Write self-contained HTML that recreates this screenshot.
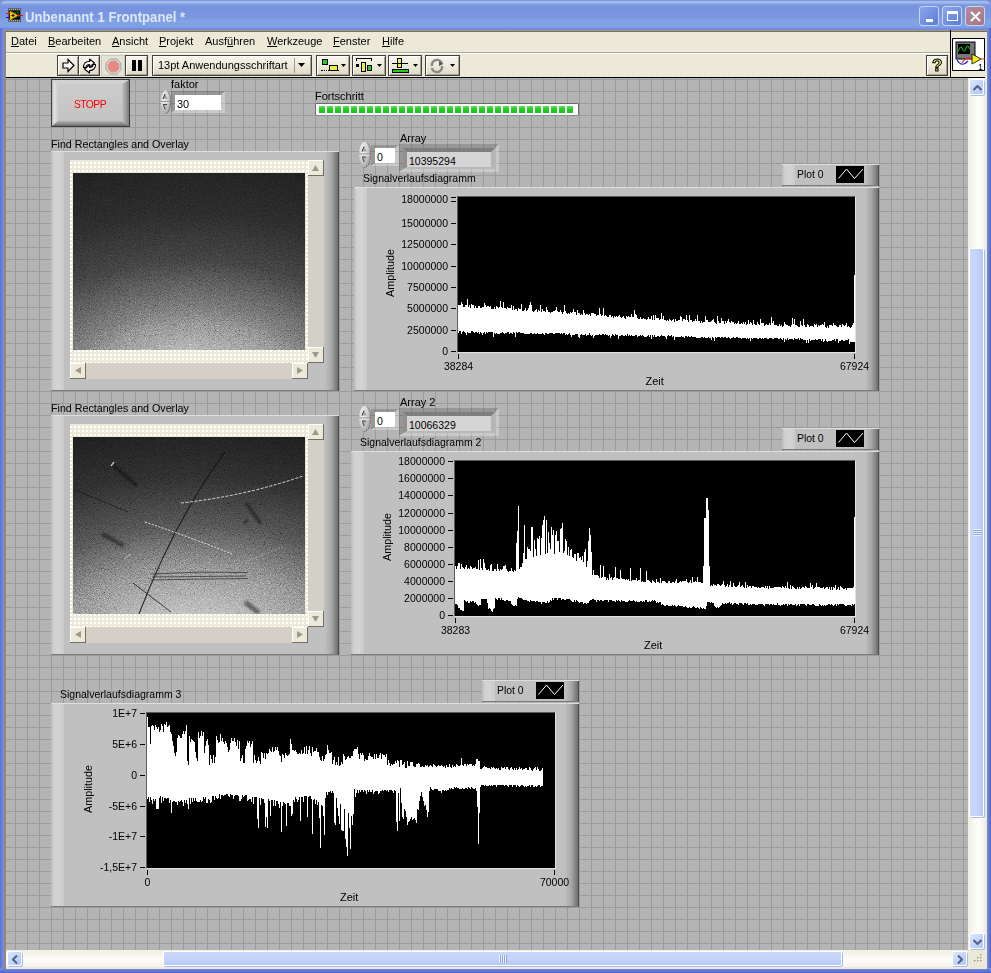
<!DOCTYPE html><html><head><meta charset="utf-8"><style>
*{margin:0;padding:0;box-sizing:border-box}
html,body{width:991px;height:973px;overflow:hidden;background:#7a8fdc}
body{position:relative;font-family:"Liberation Sans",sans-serif;font-size:11px;color:#000}
.a{position:absolute}
.t{position:absolute;white-space:pre;line-height:1;font-family:"Liberation Sans",sans-serif}
.grid{background-color:#b4b4b4;
 background-image:linear-gradient(to right,#9b9b9b 1px,transparent 1px),linear-gradient(to bottom,#9b9b9b 1px,transparent 1px);
 background-size:12px 12px;}
.tb{position:absolute;border:1px solid #404040;background:linear-gradient(#f6f5ee,#ece9d8 55%,#dcd8c8);box-shadow:inset 1px 1px 0 #fff,inset -1px -1px 0 #a8a594}
.frame{position:absolute;background:#c0c0c0;
 box-shadow: inset 0 1px 0 #dedede, inset -1px 0 0 #4c4c4c, inset 0 -1px 0 #7a7a7a;}
.frame:before{content:"";position:absolute;left:0;top:1px;bottom:1px;width:13px;background:linear-gradient(to right,#bababa,#d0d0d0 20%,#d4d4d4 60%,#cacaca 100%)}
.frame:after{content:"";position:absolute;right:1px;top:1px;bottom:1px;width:13px;background:linear-gradient(to right,#c0c0c0,#a6a6a6 50%,#6e6e6e)}
.plot{position:absolute;background:#000;border-top:1px solid #5c5c5c;border-left:1px solid #5c5c5c;box-shadow:1px 1px 0 #e2e2e2}
.ylab{position:absolute;font-size:10.5px;line-height:1;white-space:pre;text-align:right}
.tick{position:absolute;height:1px;width:5px;background:#000}
</style></head><body>
<div class="a" style="left:0;top:0;width:991px;height:30px;border-radius:7px 7px 0 0;background:linear-gradient(#6886de 0px,#a3baeb 1.5px,#a0b8ea 3px,#7e9ce0 4.5px,#7893de 7px,#7b97df 17px,#80a3e6 21px,#7fa0e4 27px,#7289dd 29px,#6f86dc 30px)"></div>
<div class="a" style="left:0;top:28px;width:4px;height:945px;background:linear-gradient(to right,#5f6fd6,#7a90e0)"></div>
<div class="a" style="left:987px;top:28px;width:4px;height:945px;background:linear-gradient(to right,#7a90e0,#5262c8)"></div>
<div class="a" style="left:0;top:968px;width:991px;height:5px;background:linear-gradient(#7a90e0,#5262c8)"></div>
<svg class="a" style="left:5px;top:7px" width="18" height="16" viewBox="0 0 18 16">
<rect x="3" y="1" width="13" height="14" fill="#5a5a5a"/>
<rect x="4" y="3.5" width="11" height="9" fill="#0a0a0a"/>
<g fill="#c8c8c8"><rect x="4" y="1.8" width="1" height="1"/><rect x="6" y="1.8" width="1" height="1"/><rect x="8" y="1.8" width="1" height="1"/><rect x="10" y="1.8" width="1" height="1"/><rect x="12" y="1.8" width="1" height="1"/><rect x="14" y="1.8" width="1" height="1"/>
<rect x="4" y="13.2" width="1" height="1"/><rect x="6" y="13.2" width="1" height="1"/><rect x="8" y="13.2" width="1" height="1"/><rect x="10" y="13.2" width="1" height="1"/><rect x="12" y="13.2" width="1" height="1"/><rect x="14" y="13.2" width="1" height="1"/></g>
<path d="M10 5 Q12 8 11 11 M12 4 Q14 7 14 10" stroke="#1c8c1c" fill="none" stroke-width="0.9"/>
<path d="M5 4 L5 13 L13 8.5 Z" fill="#f2cc10" stroke="#c89a00" stroke-width="0.5"/>
<path d="M8 7V10M6.5 8.5H9.5" stroke="#000" stroke-width="1"/>
<rect x="1" y="6" width="4" height="1" fill="#e81010"/><rect x="1" y="10" width="4" height="1" fill="#1010e8"/><rect x="13" y="8" width="5" height="1" fill="#e81010"/>
</svg>
<div class="t" style="left:25px;top:9.5px;font-size:14.4px;font-weight:bold;color:#dde6f8;transform:scaleX(0.915);transform-origin:0 0">Unbenannt 1 Frontpanel *</div>
<div class="a" style="left:919px;top:6px;width:20px;height:20px;border:1px solid #c8d4f4;border-radius:3px;background:linear-gradient(135deg,#8aa6ec,#6d8de0 60%,#5c7cd6)"><div class="a" style="left:6px;top:12px;width:7px;height:3px;background:#fff"></div></div>
<div class="a" style="left:942px;top:6px;width:20px;height:20px;border:1px solid #c8d4f4;border-radius:3px;background:linear-gradient(135deg,#8aa6ec,#6d8de0 60%,#5c7cd6)"><div class="a" style="left:4px;top:4px;width:11px;height:10px;border:1px solid #fff;border-top-width:3px"></div></div>
<div class="a" style="left:965px;top:6px;width:20px;height:20px;border:1px solid #c8d4f4;border-radius:3px;background:linear-gradient(135deg,#b28a9a,#a87686)"><svg class="a" style="left:3px;top:3px" width="13" height="13"><path d="M2 2L11 11M11 2L2 11" stroke="#fff" stroke-width="2"/></svg></div>
<div class="a" style="left:4px;top:30px;width:983px;height:939px;background:#ece9d8;border-left:2px solid #8f8b7a;border-top:2px solid #77725f"></div><div class="a" style="left:4px;top:30px;width:983px;height:1px;background:#a09884"></div>
<div class="t" style="left:11px;top:36px;font-size:11px"><u>D</u>atei</div>
<div class="t" style="left:48px;top:36px;font-size:11px"><u>B</u>earbeiten</div>
<div class="t" style="left:112px;top:36px;font-size:11px"><u>A</u>nsicht</div>
<div class="t" style="left:159px;top:36px;font-size:11px"><u>P</u>rojekt</div>
<div class="t" style="left:205px;top:36px;font-size:11px">Ausf<u>ü</u>hren</div>
<div class="t" style="left:267px;top:36px;font-size:11px"><u>W</u>erkzeuge</div>
<div class="t" style="left:333px;top:36px;font-size:11px"><u>F</u>enster</div>
<div class="t" style="left:382px;top:36px;font-size:11px"><u>H</u>ilfe</div>
<div class="a" style="left:6px;top:52px;width:944px;height:1px;background:#aca899"></div>
<div class="a" style="left:6px;top:53px;width:944px;height:1px;background:#fff"></div>
<div class="a" style="left:950px;top:30px;width:1px;height:47px;background:#000"></div>
<div class="a" style="left:6px;top:77px;width:979px;height:1px;background:#000"></div>
<div class="tb" style="left:57px;top:55px;width:22px;height:21px;"><svg class="a" style="left:3px;top:2px" width="15" height="15"><path d="M2 5H7V1.5L13 7.5L7 13.5V10H2Z" fill="#fff" stroke="#000" stroke-width="1.2"/></svg></div>
<div class="tb" style="left:78px;top:55px;width:22px;height:21px;"><svg class="a" style="left:2px;top:2px" width="17" height="16" viewBox="0 0 17 16"><path d="M2.5 9.5C2.5 5 5 3.5 8.5 3.5V1L13.5 5L8.5 9V6.5C6.5 6.5 5 7.5 5 9.5Z" fill="#fff" stroke="#000" stroke-width="1.1" stroke-linejoin="round"/><path d="M14.5 6.5C14.5 11 12 12.5 8.5 12.5V15L3.5 11L8.5 7V9.5C10.5 9.5 12 8.5 12 6.5Z" fill="#fff" stroke="#000" stroke-width="1.1" stroke-linejoin="round"/></svg></div>
<div class="a" style="left:101px;top:55px;width:24px;height:21px;background:#e6e3d6;border:1px solid #cfcbbb"><svg class="a" style="left:3px;top:2px" width="17" height="17" viewBox="0 0 17 17"><path d="M5.2 1H11.8L16 5.2V11.8L11.8 16H5.2L1 11.8V5.2Z" fill="#d8d8d0" stroke="#9c9c94" stroke-width="0.9"/><path d="M6 3H11L14 6V11L11 14H6L3 11V6Z" fill="#e8887e" stroke="#c9a8a0" stroke-width="0.8"/></svg></div>
<div class="tb" style="left:125px;top:55px;width:23px;height:21px;"><div class="a" style="left:6px;top:4px;width:4px;height:11px;background:#000"></div><div class="a" style="left:12px;top:4px;width:4px;height:11px;background:#000"></div></div>
<div class="tb" style="left:152px;top:55px;width:160px;height:21px"><div class="t" style="left:5px;top:4px;font-size:11px">13pt Anwendungsschriftart</div><div class="a" style="left:141px;top:2px;width:1px;height:15px;background:#999"></div><svg class="a" style="left:145px;top:7px" width="8" height="5"><path d="M0 0H7L3.5 4Z" fill="#000"/></svg></div>
<div class="tb" style="left:316px;top:55px;width:34px;height:21px;"><div class="a" style="left:5px;top:3px;width:6px;height:6px;background:#2c2;border:1px solid #000"></div><div class="a" style="left:12px;top:9px;width:9px;height:6px;background:#ee4;border:1px solid #000"></div><div class="a" style="left:4px;top:14px;width:18px;height:1px;border-top:1px dotted #000"></div><svg class="a" style="left:24px;top:8px" width="6" height="4"><path d="M0 0H5L2.5 3Z" fill="#000"/></svg></div>
<div class="tb" style="left:352px;top:55px;width:34px;height:21px;"><div class="a" style="left:3px;top:2px;width:16px;height:3px;border:1px solid #000;border-bottom:none"></div><div class="a" style="left:3px;top:8px;width:3px;height:3px;background:#000"></div><div class="a" style="left:8px;top:6px;width:5px;height:10px;background:#ee4;border:1px solid #000"></div><div class="a" style="left:14px;top:9px;width:5px;height:6px;background:#2c2;border:1px solid #000"></div><svg class="a" style="left:24px;top:8px" width="6" height="4"><path d="M0 0H5L2.5 3Z" fill="#000"/></svg></div>
<div class="tb" style="left:388px;top:55px;width:34px;height:21px;"><div class="a" style="left:8px;top:2px;width:5px;height:10px;background:#ee4;border:1px solid #000"></div><div class="a" style="left:3px;top:7px;width:16px;height:1px;background:#000"></div><div class="a" style="left:3px;top:13px;width:17px;height:4px;background:#2c2;border:1px solid #000"></div><svg class="a" style="left:24px;top:8px" width="6" height="4"><path d="M0 0H5L2.5 3Z" fill="#000"/></svg></div>
<div class="tb" style="left:425px;top:55px;width:35px;height:21px;"><svg class="a" style="left:3px;top:2px" width="18" height="16"><path d="M3 8A5 5 0 0 1 13 6M13 8A5 5 0 0 1 3 10" stroke="#888" stroke-width="2.5" fill="none"/><path d="M10 3L14 6L10 8" fill="#555"/></svg><svg class="a" style="left:24px;top:8px" width="6" height="4"><path d="M0 0H5L2.5 3Z" fill="#000"/></svg></div>
<div class="tb" style="left:926px;top:55px;width:22px;height:21px;top:55px;"><div class="t" style="left:5px;top:1px;font-size:17px;font-weight:bold;color:#ee5;-webkit-text-stroke:1px #000">?</div></div>
<div class="a" style="left:952px;top:38px;width:33px;height:33px;background:#fff;border:1px solid #000">
<svg class="a" style="left:1px;top:1px" width="31" height="31" viewBox="0 0 31 31">
<rect x="2" y="2" width="19" height="17" fill="#777" stroke="#000" stroke-width="1"/>
<rect x="4" y="4" width="12" height="10" fill="#000"/>
<path d="M4.5 11 Q6.5 4 8.5 9 Q10.5 14 12.5 7 Q14 4 15.5 9" stroke="#1d1" fill="none"/>
<path d="M3 20 Q8 28 14 21" stroke="#22c" fill="none" stroke-width="1.2"/>
<path d="M8 23 Q12 16 18 19 L22 18" stroke="#e22" fill="none" stroke-width="1.2"/>
<path d="M18 14 L18 24 L27 19 Z" fill="#ee2" stroke="#000" stroke-width="0.8"/>
<path d="M26 19H31" stroke="#e22"/>
<text x="24" y="30" font-size="9" font-family="Liberation Sans">1</text>
</svg></div>
<div class="a grid" style="left:6px;top:78px;width:962px;height:872px;background-position:9px 1px"></div>
<div class="a" style="left:968px;top:78px;width:17px;height:872px;background:linear-gradient(to right,#f1efe2,#fdfdfa 60%,#f4f2ea)"></div>
<div class="a" style="left:969px;top:79px;width:15px;height:16px;border:1px solid #fff;border-radius:2px;background:linear-gradient(135deg,#dce6fc,#bccffa 70%,#b0c6f6);box-shadow:1px 1px 0 #a8bce8"><svg class="a" style="left:3px;top:5px" width="9" height="6"><path d="M0.5 5L4.5 1L8.5 5" stroke="#4d6185" stroke-width="2" fill="none"/></svg></div>
<div class="a" style="left:969px;top:933px;width:15px;height:16px;border:1px solid #fff;border-radius:2px;background:linear-gradient(135deg,#dce6fc,#bccffa 70%,#b0c6f6);box-shadow:1px 1px 0 #a8bce8"><svg class="a" style="left:3px;top:5px" width="9" height="6"><path d="M0.5 1L4.5 5L8.5 1" stroke="#4d6185" stroke-width="2" fill="none"/></svg></div>
<div class="a" style="left:969px;top:248px;width:15px;height:569px;border:1px solid #fff;border-radius:2px;background:linear-gradient(to right,#c8d6fb,#c6d4fa 50%,#b4c8f6);box-shadow:1px 1px 0 #a8bce8"><div class="a" style="left:3px;top:280px;width:8px;height:7px;background:repeating-linear-gradient(#eef 0 1px,#8fa8e0 1px 2px)"></div></div>
<div class="a" style="left:6px;top:950px;width:962px;height:17px;background:linear-gradient(#f1efe2,#fdfdfa 60%,#f4f2ea)"></div>
<div class="a" style="left:7px;top:951px;width:15px;height:15px;border:1px solid #fff;border-radius:2px;background:linear-gradient(135deg,#dce6fc,#bccffa 70%,#b0c6f6);box-shadow:1px 1px 0 #a8bce8"><svg class="a" style="left:4px;top:3px" width="6" height="9"><path d="M5 0.5L1 4.5L5 8.5" stroke="#4d6185" stroke-width="2" fill="none"/></svg></div>
<div class="a" style="left:952px;top:951px;width:15px;height:15px;border:1px solid #fff;border-radius:2px;background:linear-gradient(135deg,#dce6fc,#bccffa 70%,#b0c6f6);box-shadow:1px 1px 0 #a8bce8"><svg class="a" style="left:4px;top:3px" width="6" height="9"><path d="M1 0.5L5 4.5L1 8.5" stroke="#4d6185" stroke-width="2" fill="none"/></svg></div>
<div class="a" style="left:163px;top:951px;width:679px;height:15px;border:1px solid #fff;border-radius:2px;background:linear-gradient(#c8d6fb,#c6d4fa 50%,#b4c8f6);box-shadow:1px 1px 0 #a8bce8"><div class="a" style="left:335px;top:3px;width:8px;height:8px;background:repeating-linear-gradient(to right,#eef 0 1px,#8fa8e0 1px 2px)"></div></div>
<div class="a" style="left:968px;top:950px;width:17px;height:17px;background:#ece9d8"><svg class="a" style="left:0;top:0" width="17" height="17"><g fill="#aeab9a"><rect x="12" y="4" width="2" height="2"/><rect x="9" y="7" width="2" height="2"/><rect x="12" y="7" width="2" height="2"/><rect x="6" y="10" width="2" height="2"/><rect x="9" y="10" width="2" height="2"/><rect x="12" y="10" width="2" height="2"/></g><g fill="#fff"><rect x="13" y="5" width="1" height="1"/><rect x="10" y="8" width="1" height="1"/><rect x="13" y="8" width="1" height="1"/><rect x="7" y="11" width="1" height="1"/><rect x="10" y="11" width="1" height="1"/><rect x="13" y="11" width="1" height="1"/></g></svg></div>
<div class="a" style="left:985px;top:78px;width:2px;height:891px;background:#ece9d8"></div>
<div class="a" style="left:51px;top:79px;width:79px;height:48px;border:1px solid #3a3a3a;background:#c6c6c6">
<svg class="a" style="left:0;top:0" width="77" height="46" viewBox="0 0 77 46">
<defs>
<linearGradient id="sl" x1="0" x2="1" y1="0" y2="0"><stop offset="0" stop-color="#bcbcbc"/><stop offset="0.4" stop-color="#e2e2e2"/><stop offset="1" stop-color="#cacaca"/></linearGradient>
<linearGradient id="sr" x1="0" x2="1" y1="0" y2="0"><stop offset="0" stop-color="#c2c2c2"/><stop offset="1" stop-color="#7c7c7c"/></linearGradient>
<linearGradient id="sb" x1="0" x2="0" y1="0" y2="1"><stop offset="0" stop-color="#b4b4b4"/><stop offset="1" stop-color="#6c6c6c"/></linearGradient>
<linearGradient id="sf" x1="0" x2="0" y1="0" y2="1"><stop offset="0" stop-color="#cdcdcd"/><stop offset="1" stop-color="#c2c2c2"/></linearGradient>
</defs>
<rect x="0" y="0" width="77" height="46" fill="url(#sf)"/>
<path d="M0 0H77L70 4H6Z" fill="#d2d2d2"/>
<path d="M0 0L6 4V41L0 46Z" fill="url(#sl)"/>
<path d="M77 0V46L70 41V4Z" fill="url(#sr)"/>
<path d="M0 46L6 41H70L77 46Z" fill="url(#sb)"/>
</svg>
<div class="t" style="left:22px;top:20px;font-size:10.3px;color:#f00;letter-spacing:-0.55px">STOPP</div></div>
<div class="t" style="left:171px;top:79px;font-size:11px">faktor</div>
<svg class="a" style="left:160px;top:90px" width="11" height="24" viewBox="0 0 11 24">
<defs><radialGradient id="og16090" cx="0.35" cy="0.3" r="0.8"><stop offset="0" stop-color="#f2f2f2"/><stop offset="0.55" stop-color="#cfcfcf"/><stop offset="1" stop-color="#9a9a9a"/></radialGradient></defs>
<path d="M5.5 0.3 C11.6 2.4000000000000004 11.6 21.6 5.5 23.7 C-0.6 21.6 -0.6 2.4000000000000004 5.5 0.3Z" fill="url(#og16090)"/>
<path d="M10.4 12.0 C10.6 19.200000000000003 8.25 23.2 5.5 23.5" stroke="#555" stroke-width="0.9" fill="none" stroke-dasharray="1 0.6"/>
<path d="M7.699999999999999 1.44 C10.8 4.800000000000001 10.7 8.399999999999999 10.4 12.0" stroke="#777" stroke-width="0.7" fill="none"/>
<path d="M1 11.5H10" stroke="#8a8a8a" stroke-width="0.9"/>
<path d="M1 12.6H10" stroke="#eee" stroke-width="0.6"/>
<path d="M3.0 9.0L5.0 4.0L8.0 9.0Z" fill="#a8a8a8"/>
<path d="M3.0 9.0L5.0 4.0" stroke="#222" stroke-width="0.9"/>
<path d="M3.0 14.5H8.0L5.5 20.0Z" fill="#b8b8b8"/>
<path d="M3.0 14.5H7.0M3.5 15.0L5.2 19.5" stroke="#333" stroke-width="0.9"/>
</svg>
<div class="a" style="left:171px;top:91px;width:54px;height:22px;border-style:solid;border-width:4px 4px 3px 4px;border-color:rgba(0,0,0,0.16) rgba(255,255,255,0.28) rgba(255,255,255,0.28) rgba(0,0,0,0.16)"><div class="a" style="left:0;top:0;width:46px;height:15px;background:#fff"></div><div class="t" style="left:2px;top:4px;font-size:11px">30</div></div>
<div class="t" style="left:315px;top:91px;font-size:11px">Fortschritt</div>
<div class="a" style="left:315px;top:103px;width:264px;height:13px;background:#fff;border:1px solid #6a6a6a;border-bottom-color:#888;border-radius:2px"><div class="a" style="left:3px;top:2px;width:6px;height:7px;background:linear-gradient(#60dc60,#22cc22 50%,#1ec01e)"></div><div class="a" style="left:11px;top:2px;width:6px;height:7px;background:linear-gradient(#60dc60,#22cc22 50%,#1ec01e)"></div><div class="a" style="left:19px;top:2px;width:6px;height:7px;background:linear-gradient(#60dc60,#22cc22 50%,#1ec01e)"></div><div class="a" style="left:27px;top:2px;width:6px;height:7px;background:linear-gradient(#60dc60,#22cc22 50%,#1ec01e)"></div><div class="a" style="left:35px;top:2px;width:6px;height:7px;background:linear-gradient(#60dc60,#22cc22 50%,#1ec01e)"></div><div class="a" style="left:43px;top:2px;width:6px;height:7px;background:linear-gradient(#60dc60,#22cc22 50%,#1ec01e)"></div><div class="a" style="left:51px;top:2px;width:6px;height:7px;background:linear-gradient(#60dc60,#22cc22 50%,#1ec01e)"></div><div class="a" style="left:59px;top:2px;width:6px;height:7px;background:linear-gradient(#60dc60,#22cc22 50%,#1ec01e)"></div><div class="a" style="left:67px;top:2px;width:6px;height:7px;background:linear-gradient(#60dc60,#22cc22 50%,#1ec01e)"></div><div class="a" style="left:75px;top:2px;width:6px;height:7px;background:linear-gradient(#60dc60,#22cc22 50%,#1ec01e)"></div><div class="a" style="left:83px;top:2px;width:6px;height:7px;background:linear-gradient(#60dc60,#22cc22 50%,#1ec01e)"></div><div class="a" style="left:91px;top:2px;width:6px;height:7px;background:linear-gradient(#60dc60,#22cc22 50%,#1ec01e)"></div><div class="a" style="left:99px;top:2px;width:6px;height:7px;background:linear-gradient(#60dc60,#22cc22 50%,#1ec01e)"></div><div class="a" style="left:107px;top:2px;width:6px;height:7px;background:linear-gradient(#60dc60,#22cc22 50%,#1ec01e)"></div><div class="a" style="left:115px;top:2px;width:6px;height:7px;background:linear-gradient(#60dc60,#22cc22 50%,#1ec01e)"></div><div class="a" style="left:123px;top:2px;width:6px;height:7px;background:linear-gradient(#60dc60,#22cc22 50%,#1ec01e)"></div><div class="a" style="left:131px;top:2px;width:6px;height:7px;background:linear-gradient(#60dc60,#22cc22 50%,#1ec01e)"></div><div class="a" style="left:139px;top:2px;width:6px;height:7px;background:linear-gradient(#60dc60,#22cc22 50%,#1ec01e)"></div><div class="a" style="left:147px;top:2px;width:6px;height:7px;background:linear-gradient(#60dc60,#22cc22 50%,#1ec01e)"></div><div class="a" style="left:155px;top:2px;width:6px;height:7px;background:linear-gradient(#60dc60,#22cc22 50%,#1ec01e)"></div><div class="a" style="left:163px;top:2px;width:6px;height:7px;background:linear-gradient(#60dc60,#22cc22 50%,#1ec01e)"></div><div class="a" style="left:171px;top:2px;width:6px;height:7px;background:linear-gradient(#60dc60,#22cc22 50%,#1ec01e)"></div><div class="a" style="left:179px;top:2px;width:6px;height:7px;background:linear-gradient(#60dc60,#22cc22 50%,#1ec01e)"></div><div class="a" style="left:187px;top:2px;width:6px;height:7px;background:linear-gradient(#60dc60,#22cc22 50%,#1ec01e)"></div><div class="a" style="left:195px;top:2px;width:6px;height:7px;background:linear-gradient(#60dc60,#22cc22 50%,#1ec01e)"></div><div class="a" style="left:203px;top:2px;width:6px;height:7px;background:linear-gradient(#60dc60,#22cc22 50%,#1ec01e)"></div><div class="a" style="left:211px;top:2px;width:6px;height:7px;background:linear-gradient(#60dc60,#22cc22 50%,#1ec01e)"></div><div class="a" style="left:219px;top:2px;width:6px;height:7px;background:linear-gradient(#60dc60,#22cc22 50%,#1ec01e)"></div><div class="a" style="left:227px;top:2px;width:6px;height:7px;background:linear-gradient(#60dc60,#22cc22 50%,#1ec01e)"></div><div class="a" style="left:235px;top:2px;width:6px;height:7px;background:linear-gradient(#60dc60,#22cc22 50%,#1ec01e)"></div><div class="a" style="left:243px;top:2px;width:6px;height:7px;background:linear-gradient(#60dc60,#22cc22 50%,#1ec01e)"></div><div class="a" style="left:251px;top:2px;width:6px;height:7px;background:linear-gradient(#60dc60,#22cc22 50%,#1ec01e)"></div></div>
<div class="t" style="left:51px;top:139px;font-size:10.7px">Find Rectangles and Overlay</div>
<div class="frame" style="left:51px;top:151px;width:288px;height:240px"></div>
<div class="a" style="left:70px;top:160px;width:238px;height:203px;background-color:#fff;background-image:linear-gradient(to right,transparent 2px,#ece9d8 2px),linear-gradient(to bottom,transparent 2px,#ece9d8 2px);background-size:4px 4px;background-position:0 2px"></div>
<div class="a" style="left:73px;top:173px;width:232px;height:177px;overflow:hidden"><div style="position:relative;width:232px;height:177px;background:radial-gradient(ellipse 160px 100px at 120px 221px,#b4b4b4 20%,#a4a4a4 44%,#6a6a6a 85%,#3a3a3a 133%,#262626 180%,#1c1c1c 232%)"><svg class="a" style="left:0;top:0;mix-blend-mode:overlay;opacity:0.9" width="232" height="177"><filter id="nz1"><feTurbulence type="fractalNoise" baseFrequency="1.2" numOctaves="1" seed="1"/><feColorMatrix type="saturate" values="0"/><feComponentTransfer><feFuncR type="linear" slope="2.2" intercept="-0.6"/><feFuncG type="linear" slope="2.2" intercept="-0.6"/><feFuncB type="linear" slope="2.2" intercept="-0.6"/></feComponentTransfer></filter><rect width="232" height="177" filter="url(#nz1)"/></svg></div></div>
<div class="a" style="left:308px;top:160px;width:16px;height:203px;background:#d4d0c8"></div>
<div class="a" style="left:308px;top:160px;width:16px;height:16px;background:#ece9d8;border-right:1px solid #716f64;border-bottom:1px solid #716f64;box-shadow:inset 1px 1px 0 #fff"><svg class="a" style="left:4px;top:5px" width="7" height="6"><path d="M3.5 0L7 6H0Z" fill="#9c9a8c"/></svg></div>
<div class="a" style="left:308px;top:347px;width:16px;height:16px;background:#ece9d8;border-right:1px solid #716f64;border-bottom:1px solid #716f64;box-shadow:inset 1px 1px 0 #fff"><svg class="a" style="left:4px;top:5px" width="7" height="6"><path d="M0 0H7L3.5 6Z" fill="#9c9a8c"/></svg></div>
<div class="a" style="left:70px;top:363px;width:238px;height:16px;background:#d4d0c8"></div>
<div class="a" style="left:70px;top:363px;width:16px;height:16px;background:#ece9d8;border-right:1px solid #716f64;border-bottom:1px solid #716f64;box-shadow:inset 1px 1px 0 #fff"><svg class="a" style="left:5px;top:4px" width="6" height="7"><path d="M0 3.5L6 0V7Z" fill="#9c9a8c"/></svg></div>
<div class="a" style="left:292px;top:363px;width:16px;height:16px;background:#ece9d8;border-right:1px solid #716f64;border-bottom:1px solid #716f64;box-shadow:inset 1px 1px 0 #fff"><svg class="a" style="left:5px;top:4px" width="6" height="7"><path d="M6 3.5L0 0V7Z" fill="#9c9a8c"/></svg></div>
<div class="t" style="left:51px;top:403px;font-size:10.7px">Find Rectangles and Overlay</div>
<div class="frame" style="left:51px;top:415px;width:288px;height:240px"></div>
<div class="a" style="left:70px;top:424px;width:238px;height:203px;background-color:#fff;background-image:linear-gradient(to right,transparent 2px,#ece9d8 2px),linear-gradient(to bottom,transparent 2px,#ece9d8 2px);background-size:4px 4px;background-position:0 2px"></div>
<div class="a" style="left:73px;top:437px;width:232px;height:177px;overflow:hidden"><div style="position:relative;width:232px;height:177px;background:radial-gradient(ellipse 160px 100px at 120px 221px,#c4c4c4 20%,#b4b4b4 44%,#868686 85%,#4a4a4a 133%,#2a2a2a 180%,#1a1a1a 232%)"><svg class="a" style="left:0;top:0;mix-blend-mode:overlay;opacity:0.9" width="232" height="177"><filter id="nz2"><feTurbulence type="fractalNoise" baseFrequency="1.2" numOctaves="1" seed="2"/><feColorMatrix type="saturate" values="0"/><feComponentTransfer><feFuncR type="linear" slope="2.2" intercept="-0.6"/><feFuncG type="linear" slope="2.2" intercept="-0.6"/><feFuncB type="linear" slope="2.2" intercept="-0.6"/></feComponentTransfer></filter><rect width="232" height="177" filter="url(#nz2)"/></svg><svg class="a" style="left:0;top:0" width="232" height="177" viewBox="73 437 232 177">
<defs><filter id="bl" x="-20%" y="-20%" width="140%" height="140%"><feGaussianBlur stdDeviation="0.9"/></filter></defs>
<path d="M225 452 Q175 520 139 614" stroke="#101010" stroke-width="1.1" fill="none" opacity="0.85"/>
<path d="M181 503 Q245 496 303 476" stroke="#e8e8e8" stroke-width="1" stroke-dasharray="3 1.5" fill="none" opacity="0.9"/>
<path d="M73 489 L128 512" stroke="#151515" stroke-width="0.9" fill="none" opacity="0.7"/>
<path d="M145 522 Q190 537 232 554" stroke="#f0f0f0" stroke-width="1" stroke-dasharray="2 1.5" fill="none" opacity="0.9"/>
<path d="M242 563 L283 547" stroke="#c8c8c8" stroke-width="0.8" stroke-dasharray="2 1.5" fill="none" opacity="0.7"/>
<path d="M150 574 Q200 571 248 572.5 M150 580 Q200 579 248 578.5 M152 577 L246 576" stroke="#303030" stroke-width="0.9" fill="none" opacity="0.8"/>
<path d="M133 583 L171 612" stroke="#1a1a1a" stroke-width="1" fill="none" opacity="0.8"/>
<g filter="url(#bl)" opacity="0.42">
<path d="M114 466 L137 486" stroke="#000" stroke-width="3.5" fill="none"/>
<path d="M246 503 L261 524" stroke="#000" stroke-width="3.5" fill="none"/>
<path d="M102 534 L124 546" stroke="#000" stroke-width="4.5" fill="none"/>
<path d="M245 602 L259 613" stroke="#000" stroke-width="5" fill="none"/>
<path d="M244 523 L248 520" stroke="#000" stroke-width="3" fill="none"/>
</g>
<path d="M111 466 L114 462" stroke="#ddd" stroke-width="1.2" fill="none"/>
<path d="M124 559 L131 554" stroke="#ccc" stroke-width="1" fill="none" opacity="0.7"/>
</svg></div></div>
<div class="a" style="left:308px;top:424px;width:16px;height:203px;background:#d4d0c8"></div>
<div class="a" style="left:308px;top:424px;width:16px;height:16px;background:#ece9d8;border-right:1px solid #716f64;border-bottom:1px solid #716f64;box-shadow:inset 1px 1px 0 #fff"><svg class="a" style="left:4px;top:5px" width="7" height="6"><path d="M3.5 0L7 6H0Z" fill="#9c9a8c"/></svg></div>
<div class="a" style="left:308px;top:611px;width:16px;height:16px;background:#ece9d8;border-right:1px solid #716f64;border-bottom:1px solid #716f64;box-shadow:inset 1px 1px 0 #fff"><svg class="a" style="left:4px;top:5px" width="7" height="6"><path d="M0 0H7L3.5 6Z" fill="#9c9a8c"/></svg></div>
<div class="a" style="left:70px;top:627px;width:238px;height:16px;background:#d4d0c8"></div>
<div class="a" style="left:70px;top:627px;width:16px;height:16px;background:#ece9d8;border-right:1px solid #716f64;border-bottom:1px solid #716f64;box-shadow:inset 1px 1px 0 #fff"><svg class="a" style="left:5px;top:4px" width="6" height="7"><path d="M0 3.5L6 0V7Z" fill="#9c9a8c"/></svg></div>
<div class="a" style="left:292px;top:627px;width:16px;height:16px;background:#ece9d8;border-right:1px solid #716f64;border-bottom:1px solid #716f64;box-shadow:inset 1px 1px 0 #fff"><svg class="a" style="left:5px;top:4px" width="6" height="7"><path d="M6 3.5L0 0V7Z" fill="#9c9a8c"/></svg></div>
<div class="t" style="left:400px;top:133px;font-size:11px">Array</div>
<svg class="a" style="left:358px;top:141px" width="13" height="27" viewBox="0 0 13 27">
<defs><radialGradient id="og358141" cx="0.35" cy="0.3" r="0.8"><stop offset="0" stop-color="#f2f2f2"/><stop offset="0.55" stop-color="#cfcfcf"/><stop offset="1" stop-color="#9a9a9a"/></radialGradient></defs>
<path d="M6.5 0.3 C13.6 2.7 13.6 24.3 6.5 26.7 C-0.6 24.3 -0.6 2.7 6.5 0.3Z" fill="url(#og358141)"/>
<path d="M12.4 13.5 C12.6 21.6 9.75 26.2 6.5 26.5" stroke="#555" stroke-width="0.9" fill="none" stroke-dasharray="1 0.6"/>
<path d="M9.1 1.6199999999999999 C12.8 5.4 12.7 9.45 12.4 13.5" stroke="#777" stroke-width="0.7" fill="none"/>
<path d="M1 13.0H12" stroke="#8a8a8a" stroke-width="0.9"/>
<path d="M1 14.1H12" stroke="#eee" stroke-width="0.6"/>
<path d="M4.0 10.5L6.0 5.5L9.0 10.5Z" fill="#a8a8a8"/>
<path d="M4.0 10.5L6.0 5.5" stroke="#222" stroke-width="0.9"/>
<path d="M4.0 16.0H9.0L6.5 21.5Z" fill="#b8b8b8"/>
<path d="M4.0 16.0H8.0M4.5 16.5L6.2 21.0" stroke="#333" stroke-width="0.9"/>
</svg>
<div class="a" style="left:371px;top:145px;width:28px;height:21px;border-style:solid;border-width:3px 4px 3px 4px;border-color:rgba(0,0,0,0.16) rgba(255,255,255,0.28) rgba(255,255,255,0.28) rgba(0,0,0,0.16)"><div class="a" style="left:0;top:0;width:20px;height:15px;background:#fff"></div><div class="t" style="left:2px;top:4px;font-size:10.5px">0</div></div>
<div class="a" style="left:399px;top:144px;width:100px;height:28px;border-style:solid;border-width:4px 4px 3px 4px;border-color:rgba(0,0,0,0.16) rgba(255,255,255,0.28) rgba(255,255,255,0.28) rgba(0,0,0,0.16)"><div class="a" style="left:0;top:0;width:92px;height:21px;border-style:solid;border-width:4px 4px 2px 4px;border-color:#7e7e7e #b4b4b4 #b8b8b8 #909090;background:#d4d4d4"><div class="t" style="left:2px;top:4px;font-size:10.5px">10395294</div></div></div>
<div class="t" style="left:400px;top:397px;font-size:11px">Array 2</div>
<svg class="a" style="left:358px;top:405px" width="13" height="27" viewBox="0 0 13 27">
<defs><radialGradient id="og358405" cx="0.35" cy="0.3" r="0.8"><stop offset="0" stop-color="#f2f2f2"/><stop offset="0.55" stop-color="#cfcfcf"/><stop offset="1" stop-color="#9a9a9a"/></radialGradient></defs>
<path d="M6.5 0.3 C13.6 2.7 13.6 24.3 6.5 26.7 C-0.6 24.3 -0.6 2.7 6.5 0.3Z" fill="url(#og358405)"/>
<path d="M12.4 13.5 C12.6 21.6 9.75 26.2 6.5 26.5" stroke="#555" stroke-width="0.9" fill="none" stroke-dasharray="1 0.6"/>
<path d="M9.1 1.6199999999999999 C12.8 5.4 12.7 9.45 12.4 13.5" stroke="#777" stroke-width="0.7" fill="none"/>
<path d="M1 13.0H12" stroke="#8a8a8a" stroke-width="0.9"/>
<path d="M1 14.1H12" stroke="#eee" stroke-width="0.6"/>
<path d="M4.0 10.5L6.0 5.5L9.0 10.5Z" fill="#a8a8a8"/>
<path d="M4.0 10.5L6.0 5.5" stroke="#222" stroke-width="0.9"/>
<path d="M4.0 16.0H9.0L6.5 21.5Z" fill="#b8b8b8"/>
<path d="M4.0 16.0H8.0M4.5 16.5L6.2 21.0" stroke="#333" stroke-width="0.9"/>
</svg>
<div class="a" style="left:371px;top:409px;width:28px;height:21px;border-style:solid;border-width:3px 4px 3px 4px;border-color:rgba(0,0,0,0.16) rgba(255,255,255,0.28) rgba(255,255,255,0.28) rgba(0,0,0,0.16)"><div class="a" style="left:0;top:0;width:20px;height:15px;background:#fff"></div><div class="t" style="left:2px;top:4px;font-size:10.5px">0</div></div>
<div class="a" style="left:399px;top:408px;width:100px;height:28px;border-style:solid;border-width:4px 4px 3px 4px;border-color:rgba(0,0,0,0.16) rgba(255,255,255,0.28) rgba(255,255,255,0.28) rgba(0,0,0,0.16)"><div class="a" style="left:0;top:0;width:92px;height:21px;border-style:solid;border-width:4px 4px 2px 4px;border-color:#7e7e7e #b4b4b4 #b8b8b8 #909090;background:#d4d4d4"><div class="t" style="left:2px;top:4px;font-size:10.5px">10066329</div></div></div>
<div class="frame" style="left:782px;top:164px;width:97px;height:22px"></div>
<div class="t" style="left:797px;top:170px;font-size:10.4px">Plot 0</div>
<svg class="a" style="left:836px;top:166px" width="28" height="17"><rect width="28" height="17" fill="#000"/><path d="M2.5 12.5L10.5 3L18.5 12.5L27 3" stroke="#fff" fill="none" stroke-width="1"/></svg>
<div class="t" style="left:363px;top:173px;font-size:10.5px">Signalverlaufsdiagramm</div>
<div class="frame" style="left:354px;top:187px;width:525px;height:204px"></div>
<div class="plot" style="left:457px;top:196px;width:398px;height:156px"></div>
<div class="tick" style="left:451px;top:351px"></div>
<div class="ylab" style="left:346px;width:102px;top:346px">0</div>
<div class="tick" style="left:451px;top:330px"></div>
<div class="ylab" style="left:346px;width:102px;top:325px">2500000</div>
<div class="tick" style="left:451px;top:308px"></div>
<div class="ylab" style="left:346px;width:102px;top:303px">5000000</div>
<div class="tick" style="left:451px;top:287px"></div>
<div class="ylab" style="left:346px;width:102px;top:282px">7500000</div>
<div class="tick" style="left:451px;top:266px"></div>
<div class="ylab" style="left:346px;width:102px;top:261px">10000000</div>
<div class="tick" style="left:451px;top:244px"></div>
<div class="ylab" style="left:346px;width:102px;top:239px">12500000</div>
<div class="tick" style="left:451px;top:223px"></div>
<div class="ylab" style="left:346px;width:102px;top:218px">15000000</div>
<div class="tick" style="left:451px;top:197px"></div>
<div class="ylab" style="left:346px;width:102px;top:193.5px">18000000</div>
<div class="tick" style="left:451px;top:201px"></div>
<div class="a" style="left:458px;top:354px;width:1px;height:5px;background:#000"></div>
<div class="t" style="left:443.9px;top:361px;font-size:10.5px">38284</div>
<div class="a" style="left:854px;top:354px;width:1px;height:5px;background:#000"></div>
<div class="t" style="left:839.9px;top:361px;font-size:10.5px">67924</div>
<div class="t" style="left:385px;top:296.5px;font-size:10.8px;transform:rotate(-90deg);transform-origin:0 0">Amplitude</div>
<div class="t" style="left:645.5px;top:375.5px;font-size:11px">Zeit</div>
<svg class="a" style="left:0;top:0" width="991" height="973" viewBox="0 0 991 973"><path d="M458.5 305V333M459.5 305V331M460.5 305V331M461.5 302V334M462.5 304V332M463.5 307V331M464.5 307V332M465.5 305V333M466.5 305V335M467.5 299V332M468.5 307V333M469.5 305V333M470.5 308V333M471.5 304V331M472.5 305V331M473.5 305V332M474.5 308V333M475.5 306V332M476.5 308V332M477.5 308V333M478.5 306V332M479.5 306V334M480.5 308V332M481.5 308V333M482.5 307V335M483.5 307V333M484.5 303V332M485.5 305V334M486.5 307V332M487.5 306V333M488.5 306V332M489.5 307V332M490.5 306V332M491.5 309V332M492.5 309V332M493.5 309V337M494.5 307V333M495.5 309V334M496.5 306V333M497.5 307V334M498.5 308V334M499.5 307V334M500.5 301V333M501.5 307V333M502.5 308V332M503.5 302V333M504.5 308V334M505.5 308V333M506.5 309V333M507.5 307V332M508.5 308V332M509.5 308V334M510.5 308V333M511.5 305V333M512.5 310V334M513.5 306V332M514.5 310V333M515.5 309V337M516.5 309V332M517.5 311V333M518.5 308V332M519.5 309V332M520.5 309V333M521.5 304V333M522.5 311V333M523.5 311V333M524.5 310V334M525.5 308V334M526.5 311V334M527.5 310V334M528.5 308V334M529.5 305V334M530.5 302V333M531.5 305V333M532.5 311V334M533.5 312V334M534.5 311V333M535.5 310V334M536.5 309V334M537.5 312V333M538.5 310V334M539.5 311V334M540.5 305V334M541.5 312V334M542.5 309V333M543.5 311V334M544.5 311V335M545.5 312V333M546.5 307V333M547.5 310V334M548.5 312V334M549.5 312V333M550.5 313V333M551.5 312V333M552.5 312V333M553.5 311V334M554.5 311V334M555.5 310V333M556.5 307V333M557.5 311V333M558.5 312V333M559.5 312V333M560.5 310V334M561.5 312V333M562.5 314V334M563.5 312V333M564.5 305V333M565.5 311V335M566.5 313V334M567.5 314V335M568.5 313V334M569.5 314V333M570.5 312V335M571.5 313V337M572.5 312V335M573.5 309V335M574.5 312V335M575.5 312V334M576.5 315V334M577.5 310V334M578.5 313V337M579.5 313V338M580.5 315V335M581.5 314V334M582.5 315V335M583.5 310V335M584.5 313V335M585.5 315V334M586.5 314V336M587.5 314V335M588.5 315V335M589.5 314V333M590.5 316V335M591.5 313V336M592.5 313V335M593.5 313V338M594.5 314V336M595.5 314V335M596.5 316V335M597.5 315V335M598.5 315V335M599.5 308V334M600.5 314V335M601.5 316V335M602.5 315V334M603.5 308V334M604.5 316V335M605.5 315V334M606.5 316V335M607.5 317V335M608.5 317V336M609.5 315V335M610.5 315V338M611.5 317V336M612.5 316V334M613.5 318V335M614.5 316V336M615.5 317V334M616.5 316V335M617.5 317V335M618.5 316V339M619.5 315V336M620.5 317V336M621.5 318V335M622.5 317V335M623.5 316V336M624.5 318V336M625.5 319V335M626.5 316V336M627.5 317V334M628.5 316V336M629.5 317V335M630.5 317V336M631.5 314V335M632.5 317V336M633.5 317V336M634.5 310V336M635.5 314V335M636.5 315V335M637.5 318V337M638.5 319V336M639.5 319V336M640.5 317V335M641.5 319V336M642.5 319V335M643.5 318V336M644.5 319V337M645.5 319V337M646.5 320V337M647.5 319V336M648.5 317V335M649.5 319V337M650.5 319V335M651.5 316V339M652.5 320V335M653.5 315V337M654.5 320V335M655.5 315V337M656.5 318V337M657.5 318V336M658.5 318V336M659.5 320V337M660.5 319V336M661.5 313V335M662.5 319V336M663.5 316V336M664.5 320V336M665.5 320V337M666.5 321V339M667.5 320V336M668.5 321V335M669.5 319V336M670.5 320V336M671.5 321V335M672.5 320V337M673.5 319V336M674.5 322V340M675.5 319V337M676.5 321V337M677.5 321V337M678.5 320V337M679.5 320V337M680.5 316V337M681.5 317V336M682.5 321V337M683.5 319V337M684.5 319V338M685.5 320V336M686.5 315V336M687.5 320V337M688.5 322V336M689.5 315V337M690.5 320V337M691.5 320V336M692.5 322V337M693.5 321V337M694.5 321V337M695.5 319V337M696.5 321V338M697.5 315V338M698.5 321V338M699.5 321V338M700.5 323V338M701.5 321V337M702.5 323V337M703.5 322V338M704.5 322V337M705.5 316V338M706.5 320V338M707.5 320V338M708.5 322V337M709.5 322V338M710.5 322V338M711.5 321V340M712.5 320V337M713.5 319V338M714.5 322V341M715.5 323V337M716.5 324V338M717.5 316V337M718.5 321V337M719.5 323V337M720.5 323V338M721.5 318V337M722.5 321V337M723.5 321V338M724.5 324V337M725.5 321V337M726.5 323V338M727.5 321V338M728.5 319V337M729.5 322V338M730.5 323V339M731.5 321V338M732.5 322V338M733.5 322V337M734.5 324V338M735.5 323V338M736.5 324V337M737.5 323V337M738.5 321V338M739.5 324V338M740.5 324V338M741.5 323V339M742.5 324V338M743.5 322V338M744.5 324V338M745.5 322V338M746.5 325V339M747.5 324V338M748.5 320V339M749.5 324V338M750.5 322V341M751.5 323V338M752.5 325V339M753.5 320V338M754.5 324V338M755.5 325V338M756.5 325V338M757.5 322V339M758.5 324V339M759.5 325V338M760.5 319V338M761.5 323V339M762.5 323V338M763.5 323V339M764.5 326V338M765.5 325V338M766.5 324V338M767.5 325V339M768.5 325V339M769.5 323V338M770.5 325V338M771.5 317V338M772.5 323V339M773.5 321V339M774.5 325V338M775.5 325V338M776.5 325V338M777.5 326V338M778.5 326V339M779.5 324V339M780.5 326V338M781.5 325V339M782.5 327V340M783.5 326V338M784.5 322V342M785.5 324V339M786.5 325V340M787.5 325V338M788.5 326V340M789.5 326V339M790.5 327V339M791.5 325V339M792.5 318V339M793.5 324V340M794.5 319V338M795.5 325V339M796.5 325V339M797.5 326V339M798.5 327V338M799.5 327V340M800.5 321V338M801.5 325V339M802.5 326V339M803.5 319V340M804.5 325V340M805.5 327V340M806.5 327V343M807.5 324V340M808.5 325V343M809.5 327V339M810.5 326V341M811.5 326V340M812.5 326V340M813.5 327V340M814.5 324V340M815.5 325V339M816.5 324V340M817.5 327V340M818.5 325V339M819.5 326V339M820.5 325V339M821.5 325V341M822.5 324V339M823.5 325V342M824.5 322V341M825.5 327V339M826.5 328V341M827.5 326V342M828.5 328V341M829.5 325V341M830.5 325V341M831.5 325V341M832.5 326V340M833.5 323V340M834.5 325V339M835.5 325V341M836.5 326V339M837.5 327V339M838.5 327V343M839.5 325V341M840.5 325V341M841.5 327V340M842.5 324V340M843.5 325V341M844.5 326V341M845.5 325V340M846.5 323V340M847.5 327V340M848.5 326V339M849.5 327V344M850.5 328V342M851.5 327V342M852.5 325V342M853.5 323V342M854.5 326V342" stroke="#fff" stroke-width="1" fill="none" shape-rendering="crispEdges"/><path d="M854.5 275V340" stroke="#fff" stroke-width="1"/></svg>
<div class="frame" style="left:782px;top:428px;width:97px;height:22px"></div>
<div class="t" style="left:797px;top:434px;font-size:10.4px">Plot 0</div>
<svg class="a" style="left:836px;top:430px" width="28" height="17"><rect width="28" height="17" fill="#000"/><path d="M2.5 12.5L10.5 3L18.5 12.5L27 3" stroke="#fff" fill="none" stroke-width="1"/></svg>
<div class="t" style="left:360px;top:437px;font-size:10.5px">Signalverlaufsdiagramm 2</div>
<div class="frame" style="left:351px;top:451px;width:528px;height:204px"></div>
<div class="plot" style="left:454px;top:460px;width:401px;height:156px"></div>
<div class="tick" style="left:448px;top:615px"></div>
<div class="ylab" style="left:343px;width:102px;top:610px">0</div>
<div class="tick" style="left:448px;top:598px"></div>
<div class="ylab" style="left:343px;width:102px;top:593px">2000000</div>
<div class="tick" style="left:448px;top:581px"></div>
<div class="ylab" style="left:343px;width:102px;top:576px">4000000</div>
<div class="tick" style="left:448px;top:564px"></div>
<div class="ylab" style="left:343px;width:102px;top:559px">6000000</div>
<div class="tick" style="left:448px;top:547px"></div>
<div class="ylab" style="left:343px;width:102px;top:542px">8000000</div>
<div class="tick" style="left:448px;top:530px"></div>
<div class="ylab" style="left:343px;width:102px;top:525px">10000000</div>
<div class="tick" style="left:448px;top:513px"></div>
<div class="ylab" style="left:343px;width:102px;top:508px">12000000</div>
<div class="tick" style="left:448px;top:495px"></div>
<div class="ylab" style="left:343px;width:102px;top:490px">14000000</div>
<div class="tick" style="left:448px;top:478px"></div>
<div class="ylab" style="left:343px;width:102px;top:473px">16000000</div>
<div class="tick" style="left:448px;top:461px"></div>
<div class="ylab" style="left:343px;width:102px;top:456px">18000000</div>
<div class="a" style="left:455px;top:618px;width:1px;height:5px;background:#000"></div>
<div class="t" style="left:440.9px;top:625px;font-size:10.5px">38283</div>
<div class="a" style="left:854px;top:618px;width:1px;height:5px;background:#000"></div>
<div class="t" style="left:839.9px;top:625px;font-size:10.5px">67924</div>
<div class="t" style="left:382px;top:560.5px;font-size:10.8px;transform:rotate(-90deg);transform-origin:0 0">Amplitude</div>
<div class="t" style="left:644.0px;top:639.5px;font-size:11px">Zeit</div>
<svg class="a" style="left:0;top:0" width="991" height="973" viewBox="0 0 991 973"><path d="M455.5 566V604M456.5 569V604M457.5 566V605M458.5 563V608M459.5 563V608M460.5 569V610M461.5 564V610M462.5 567V611M463.5 568V611M464.5 569V600M465.5 567V601M466.5 565V602M467.5 569V601M468.5 568V603M469.5 569V603M470.5 566V601M471.5 567V602M472.5 569V601M473.5 568V601M474.5 568V603M475.5 567V602M476.5 569V604M477.5 569V605M478.5 560V606M479.5 570V605M480.5 559V605M481.5 568V599M482.5 570V599M483.5 559V599M484.5 563V599M485.5 568V599M486.5 570V599M487.5 570V603M488.5 569V609M489.5 571V608M490.5 565V609M491.5 564V611M492.5 571V612M493.5 571V609M494.5 569V608M495.5 569V598M496.5 571V599M497.5 564V600M498.5 569V598M499.5 571V598M500.5 569V600M501.5 570V598M502.5 569V600M503.5 566V600M504.5 566V601M505.5 565V601M506.5 569V600M507.5 571V600M508.5 572V601M509.5 571V601M510.5 571V601M511.5 568V604M512.5 571V605M513.5 572V606M514.5 570V606M515.5 571V605M516.5 543V606M517.5 531V599M518.5 506V597M519.5 569V598M520.5 567V598M521.5 567V598M522.5 563V599M523.5 553V600M524.5 525V600M525.5 559V600M526.5 559V600M527.5 547V601M528.5 549V601M529.5 549V602M530.5 551V600M531.5 527V601M532.5 527V601M533.5 557V601M534.5 540V601M535.5 549V602M536.5 556V601M537.5 538V601M538.5 539V602M539.5 536V602M540.5 555V602M541.5 538V604M542.5 525V602M543.5 520V602M544.5 516V602M545.5 554V603M546.5 520V603M547.5 553V601M548.5 532V603M549.5 543V602M550.5 549V600M551.5 527V601M552.5 535V598M553.5 530V600M554.5 554V598M555.5 535V598M556.5 531V598M557.5 541V600M558.5 541V598M559.5 552V598M560.5 529V598M561.5 528V600M562.5 523V599M563.5 553V599M564.5 551V600M565.5 539V600M566.5 541V599M567.5 555V599M568.5 547V599M569.5 556V599M570.5 550V600M571.5 549V601M572.5 557V602M573.5 558V602M574.5 554V600M575.5 554V602M576.5 561V600M577.5 553V601M578.5 553V602M579.5 558V603M580.5 557V602M581.5 560V602M582.5 556V602M583.5 562V604M584.5 552V603M585.5 549V603M586.5 567V604M587.5 561V603M588.5 541V603M589.5 528V601M590.5 535V600M591.5 552V600M592.5 575V599M593.5 570V599M594.5 575V600M595.5 575V600M596.5 575V602M597.5 575V600M598.5 576V600M599.5 578V601M600.5 565V600M601.5 578V600M602.5 577V601M603.5 566V601M604.5 577V600M605.5 577V600M606.5 580V600M607.5 578V600M608.5 580V602M609.5 574V600M610.5 578V600M611.5 577V600M612.5 580V601M613.5 578V601M614.5 577V601M615.5 567V602M616.5 578V600M617.5 578V601M618.5 579V600M619.5 579V601M620.5 570V602M621.5 578V600M622.5 579V601M623.5 579V601M624.5 579V601M625.5 580V602M626.5 579V602M627.5 580V602M628.5 579V601M629.5 581V600M630.5 568V601M631.5 581V601M632.5 580V601M633.5 580V600M634.5 580V601M635.5 580V602M636.5 578V601M637.5 581V602M638.5 580V602M639.5 580V602M640.5 568V601M641.5 582V601M642.5 581V602M643.5 582V601M644.5 582V602M645.5 582V600M646.5 571V600M647.5 580V602M648.5 580V602M649.5 581V601M650.5 582V602M651.5 583V601M652.5 580V600M653.5 581V601M654.5 582V600M655.5 583V601M656.5 579V603M657.5 582V602M658.5 582V603M659.5 583V602M660.5 578V602M661.5 583V605M662.5 581V604M663.5 581V605M664.5 581V606M665.5 582V606M666.5 583V605M667.5 583V605M668.5 581V606M669.5 581V606M670.5 583V606M671.5 583V606M672.5 582V605M673.5 582V606M674.5 583V605M675.5 581V606M676.5 579V607M677.5 583V606M678.5 583V605M679.5 582V606M680.5 581V606M681.5 582V606M682.5 581V606M683.5 581V607M684.5 581V607M685.5 581V606M686.5 579V607M687.5 582V608M688.5 583V608M689.5 582V607M690.5 580V608M691.5 583V608M692.5 577V607M693.5 582V606M694.5 582V607M695.5 581V608M696.5 582V608M697.5 577V607M698.5 582V608M699.5 582V609M700.5 582V607M701.5 583V608M702.5 583V609M703.5 566V608M704.5 518V609M705.5 518V609M706.5 498V606M707.5 498V602M708.5 510V602M709.5 566V602M710.5 586V603M711.5 585V602M712.5 586V603M713.5 584V603M714.5 585V606M715.5 585V607M716.5 586V608M717.5 584V607M718.5 584V608M719.5 585V607M720.5 586V606M721.5 585V605M722.5 584V603M723.5 581V604M724.5 585V604M725.5 587V603M726.5 586V604M727.5 584V603M728.5 587V603M729.5 585V602M730.5 581V604M731.5 587V603M732.5 587V605M733.5 583V604M734.5 586V603M735.5 587V603M736.5 587V604M737.5 586V604M738.5 585V605M739.5 582V603M740.5 587V603M741.5 586V603M742.5 585V604M743.5 587V605M744.5 588V603M745.5 582V603M746.5 588V604M747.5 585V603M748.5 587V605M749.5 586V605M750.5 586V604M751.5 588V605M752.5 586V604M753.5 586V604M754.5 587V604M755.5 587V605M756.5 587V605M757.5 588V605M758.5 587V604M759.5 588V604M760.5 588V604M761.5 587V604M762.5 587V604M763.5 587V605M764.5 588V606M765.5 586V604M766.5 588V604M767.5 586V604M768.5 589V604M769.5 586V605M770.5 588V604M771.5 588V604M772.5 588V605M773.5 588V604M774.5 587V605M775.5 587V605M776.5 587V605M777.5 587V603M778.5 587V605M779.5 587V605M780.5 587V606M781.5 588V605M782.5 586V605M783.5 587V604M784.5 588V605M785.5 586V604M786.5 588V604M787.5 582V606M788.5 588V604M789.5 589V605M790.5 585V604M791.5 589V604M792.5 586V605M793.5 587V605M794.5 588V605M795.5 589V604M796.5 589V606M797.5 587V605M798.5 589V604M799.5 587V606M800.5 589V604M801.5 588V604M802.5 587V604M803.5 587V604M804.5 588V604M805.5 586V605M806.5 587V606M807.5 588V604M808.5 588V604M809.5 588V605M810.5 583V605M811.5 587V605M812.5 585V604M813.5 589V604M814.5 588V605M815.5 587V606M816.5 583V606M817.5 587V606M818.5 587V606M819.5 587V604M820.5 588V605M821.5 588V606M822.5 588V605M823.5 587V606M824.5 589V605M825.5 588V606M826.5 587V605M827.5 587V605M828.5 589V604M829.5 587V604M830.5 590V605M831.5 587V604M832.5 590V605M833.5 587V606M834.5 588V605M835.5 585V604M836.5 590V606M837.5 589V604M838.5 587V605M839.5 590V604M840.5 586V604M841.5 587V604M842.5 588V604M843.5 589V604M844.5 589V605M845.5 588V606M846.5 590V606M847.5 588V605M848.5 588V605M849.5 588V605M850.5 588V605M851.5 588V606M852.5 588V604M853.5 587V605M854.5 587V604" stroke="#fff" stroke-width="1" fill="none" shape-rendering="crispEdges"/><path d="M854.5 517V602" stroke="#fff" stroke-width="1"/></svg>
<div class="frame" style="left:482px;top:680px;width:97px;height:22px"></div>
<div class="t" style="left:497px;top:686px;font-size:10.4px">Plot 0</div>
<svg class="a" style="left:536px;top:682px" width="28" height="17"><rect width="28" height="17" fill="#000"/><path d="M2.5 12.5L10.5 3L18.5 12.5L27 3" stroke="#fff" fill="none" stroke-width="1"/></svg>
<div class="t" style="left:60px;top:689px;font-size:10.5px">Signalverlaufsdiagramm 3</div>
<div class="frame" style="left:51px;top:703px;width:528px;height:204px"></div>
<div class="plot" style="left:146px;top:712px;width:409px;height:156px"></div>
<div class="tick" style="left:140px;top:713px"></div>
<div class="ylab" style="left:35px;width:102px;top:708px">1E+7</div>
<div class="tick" style="left:140px;top:744px"></div>
<div class="ylab" style="left:35px;width:102px;top:739px">5E+6</div>
<div class="tick" style="left:140px;top:775px"></div>
<div class="ylab" style="left:35px;width:102px;top:770px">0</div>
<div class="tick" style="left:140px;top:806px"></div>
<div class="ylab" style="left:35px;width:102px;top:801px">-5E+6</div>
<div class="tick" style="left:140px;top:836px"></div>
<div class="ylab" style="left:35px;width:102px;top:831px">-1E+7</div>
<div class="tick" style="left:140px;top:867px"></div>
<div class="ylab" style="left:35px;width:102px;top:862px">-1,5E+7</div>
<div class="a" style="left:147px;top:870px;width:1px;height:5px;background:#000"></div>
<div class="t" style="left:144.6px;top:877px;font-size:10.5px">0</div>
<div class="a" style="left:554px;top:870px;width:1px;height:5px;background:#000"></div>
<div class="t" style="left:539.9px;top:877px;font-size:10.5px">70000</div>
<div class="t" style="left:83px;top:812.5px;font-size:10.8px;transform:rotate(-90deg);transform-origin:0 0">Amplitude</div>
<div class="t" style="left:340.0px;top:891.5px;font-size:11px">Zeit</div>
<svg class="a" style="left:0;top:0" width="991" height="973" viewBox="0 0 991 973"><path d="M147.5 717V799M148.5 727V797M149.5 727V802M150.5 744V797M151.5 726V800M152.5 725V804M153.5 726V799M154.5 730V801M155.5 725V799M156.5 727V809M157.5 729V809M158.5 727V809M159.5 732V798M160.5 730V796M161.5 724V803M162.5 726V797M163.5 732V801M164.5 724V798M165.5 725V798M166.5 722V799M167.5 727V798M168.5 726V798M169.5 725V803M170.5 732V800M171.5 734V813M172.5 741V802M173.5 746V801M174.5 753V801M175.5 756V802M176.5 752V802M177.5 738V805M178.5 735V801M179.5 736V802M180.5 738V801M181.5 738V800M182.5 734V802M183.5 731V806M184.5 734V800M185.5 731V803M186.5 725V800M187.5 761V804M188.5 765V809M189.5 736V798M190.5 742V804M191.5 739V798M192.5 740V802M193.5 741V798M194.5 742V801M195.5 752V798M196.5 758V801M197.5 761V802M198.5 732V802M199.5 738V802M200.5 736V800M201.5 731V802M202.5 736V801M203.5 732V797M204.5 753V799M205.5 746V797M206.5 741V803M207.5 739V803M208.5 745V799M209.5 765V800M210.5 755V803M211.5 759V802M212.5 763V796M213.5 755V796M214.5 763V800M215.5 757V796M216.5 736V798M217.5 740V799M218.5 743V798M219.5 742V794M220.5 734V799M221.5 741V795M222.5 738V795M223.5 742V796M224.5 744V795M225.5 741V795M226.5 743V794M227.5 747V794M228.5 752V796M229.5 750V797M230.5 743V794M231.5 738V795M232.5 741V795M233.5 741V799M234.5 738V796M235.5 742V795M236.5 746V795M237.5 740V795M238.5 749V796M239.5 741V801M240.5 761V801M241.5 758V799M242.5 755V795M243.5 763V797M244.5 763V796M245.5 749V795M246.5 746V795M247.5 741V801M248.5 743V800M249.5 741V799M250.5 747V799M251.5 744V802M252.5 741V797M253.5 763V804M254.5 755V797M255.5 760V797M256.5 763V797M257.5 761V819M258.5 757V828M259.5 761V798M260.5 764V805M261.5 752V798M262.5 753V799M263.5 758V799M264.5 753V803M265.5 759V827M266.5 753V817M267.5 754V828M268.5 753V799M269.5 749V801M270.5 751V816M271.5 752V800M272.5 747V800M273.5 752V806M274.5 751V800M275.5 747V806M276.5 750V801M277.5 747V801M278.5 751V804M279.5 755V808M280.5 756V802M281.5 762V832M282.5 754V806M283.5 755V802M284.5 758V803M285.5 753V804M286.5 755V826M287.5 756V803M288.5 755V803M289.5 754V806M290.5 739V806M291.5 744V816M292.5 750V814M293.5 750V800M294.5 751V802M295.5 750V797M296.5 752V799M297.5 754V802M298.5 754V800M299.5 753V797M300.5 754V821M301.5 750V797M302.5 754V797M303.5 753V802M304.5 747V796M305.5 754V796M306.5 746V796M307.5 754V817M308.5 750V797M309.5 746V796M310.5 753V796M311.5 756V799M312.5 747V834M313.5 752V800M314.5 751V799M315.5 751V804M316.5 748V800M317.5 752V805M318.5 752V802M319.5 757V818M320.5 760V848M321.5 761V805M322.5 756V806M323.5 761V816M324.5 759V835M325.5 755V798M326.5 754V792M327.5 745V795M328.5 750V792M329.5 753V792M330.5 753V791M331.5 752V793M332.5 764V791M333.5 760V793M334.5 757V823M335.5 765V825M336.5 762V798M337.5 765V808M338.5 757V816M339.5 766V824M340.5 765V804M341.5 762V830M342.5 764V831M343.5 754V831M344.5 756V809M345.5 760V839M346.5 759V847M347.5 757V856M348.5 756V813M349.5 758V828M350.5 758V849M351.5 756V816M352.5 756V825M353.5 751V814M354.5 749V789M355.5 749V797M356.5 749V793M357.5 747V790M358.5 754V793M359.5 759V790M360.5 753V792M361.5 755V790M362.5 753V790M363.5 755V792M364.5 761V790M365.5 759V791M366.5 760V794M367.5 760V790M368.5 756V792M369.5 753V790M370.5 756V792M371.5 757V792M372.5 757V790M373.5 759V794M374.5 754V792M375.5 759V791M376.5 754V791M377.5 758V791M378.5 758V794M379.5 755V793M380.5 753V791M381.5 759V791M382.5 754V790M383.5 755V791M384.5 755V790M385.5 757V790M386.5 754V791M387.5 765V790M388.5 760V792M389.5 763V790M390.5 766V790M391.5 764V790M392.5 765V791M393.5 764V793M394.5 764V790M395.5 761V791M396.5 763V822M397.5 760V831M398.5 761V793M399.5 767V821M400.5 760V788M401.5 760V803M402.5 765V817M403.5 764V819M404.5 762V809M405.5 768V811M406.5 768V817M407.5 761V825M408.5 766V822M409.5 766V821M410.5 762V819M411.5 762V817M412.5 762V820M413.5 766V819M414.5 767V818M415.5 767V820M416.5 764V823M417.5 764V809M418.5 763V810M419.5 764V801M420.5 767V796M421.5 767V792M422.5 766V797M423.5 767V801M424.5 767V806M425.5 765V805M426.5 766V810M427.5 765V817M428.5 767V812M429.5 766V791M430.5 765V787M431.5 766V789M432.5 767V790M433.5 764V790M434.5 765V789M435.5 766V789M436.5 767V789M437.5 766V789M438.5 765V791M439.5 766V791M440.5 766V791M441.5 765V793M442.5 766V790M443.5 767V790M444.5 766V791M445.5 768V790M446.5 765V791M447.5 767V790M448.5 767V790M449.5 764V788M450.5 767V789M451.5 768V788M452.5 765V789M453.5 767V789M454.5 766V787M455.5 767V788M456.5 764V787M457.5 765V788M458.5 766V788M459.5 766V789M460.5 765V789M461.5 758V789M462.5 765V788M463.5 766V789M464.5 764V789M465.5 764V788M466.5 766V788M467.5 764V789M468.5 765V787M469.5 764V788M470.5 764V789M471.5 764V787M472.5 766V788M473.5 765V789M474.5 766V789M475.5 764V788M476.5 759V791M477.5 759V807M478.5 761V844M479.5 761V813M480.5 769V787M481.5 769V785M482.5 768V785M483.5 767V785M484.5 766V786M485.5 767V785M486.5 767V786M487.5 768V786M488.5 768V786M489.5 768V785M490.5 769V786M491.5 767V785M492.5 768V786M493.5 767V785M494.5 768V785M495.5 769V785M496.5 768V787M497.5 769V785M498.5 768V785M499.5 770V785M500.5 770V785M501.5 767V785M502.5 768V785M503.5 768V785M504.5 767V786M505.5 769V785M506.5 767V785M507.5 767V786M508.5 769V787M509.5 770V785M510.5 768V785M511.5 767V785M512.5 769V787M513.5 770V785M514.5 768V785M515.5 770V785M516.5 768V787M517.5 770V785M518.5 769V786M519.5 767V787M520.5 769V786M521.5 768V785M522.5 770V785M523.5 769V786M524.5 769V787M525.5 768V786M526.5 768V787M527.5 770V786M528.5 770V786M529.5 767V785M530.5 768V787M531.5 770V785M532.5 771V785M533.5 769V787M534.5 768V787M535.5 767V786M536.5 770V787M537.5 767V786M538.5 769V785M539.5 771V785M540.5 771V787M541.5 770V786M542.5 768V786" stroke="#fff" stroke-width="1" fill="none" shape-rendering="crispEdges"/></svg>
</body></html>
